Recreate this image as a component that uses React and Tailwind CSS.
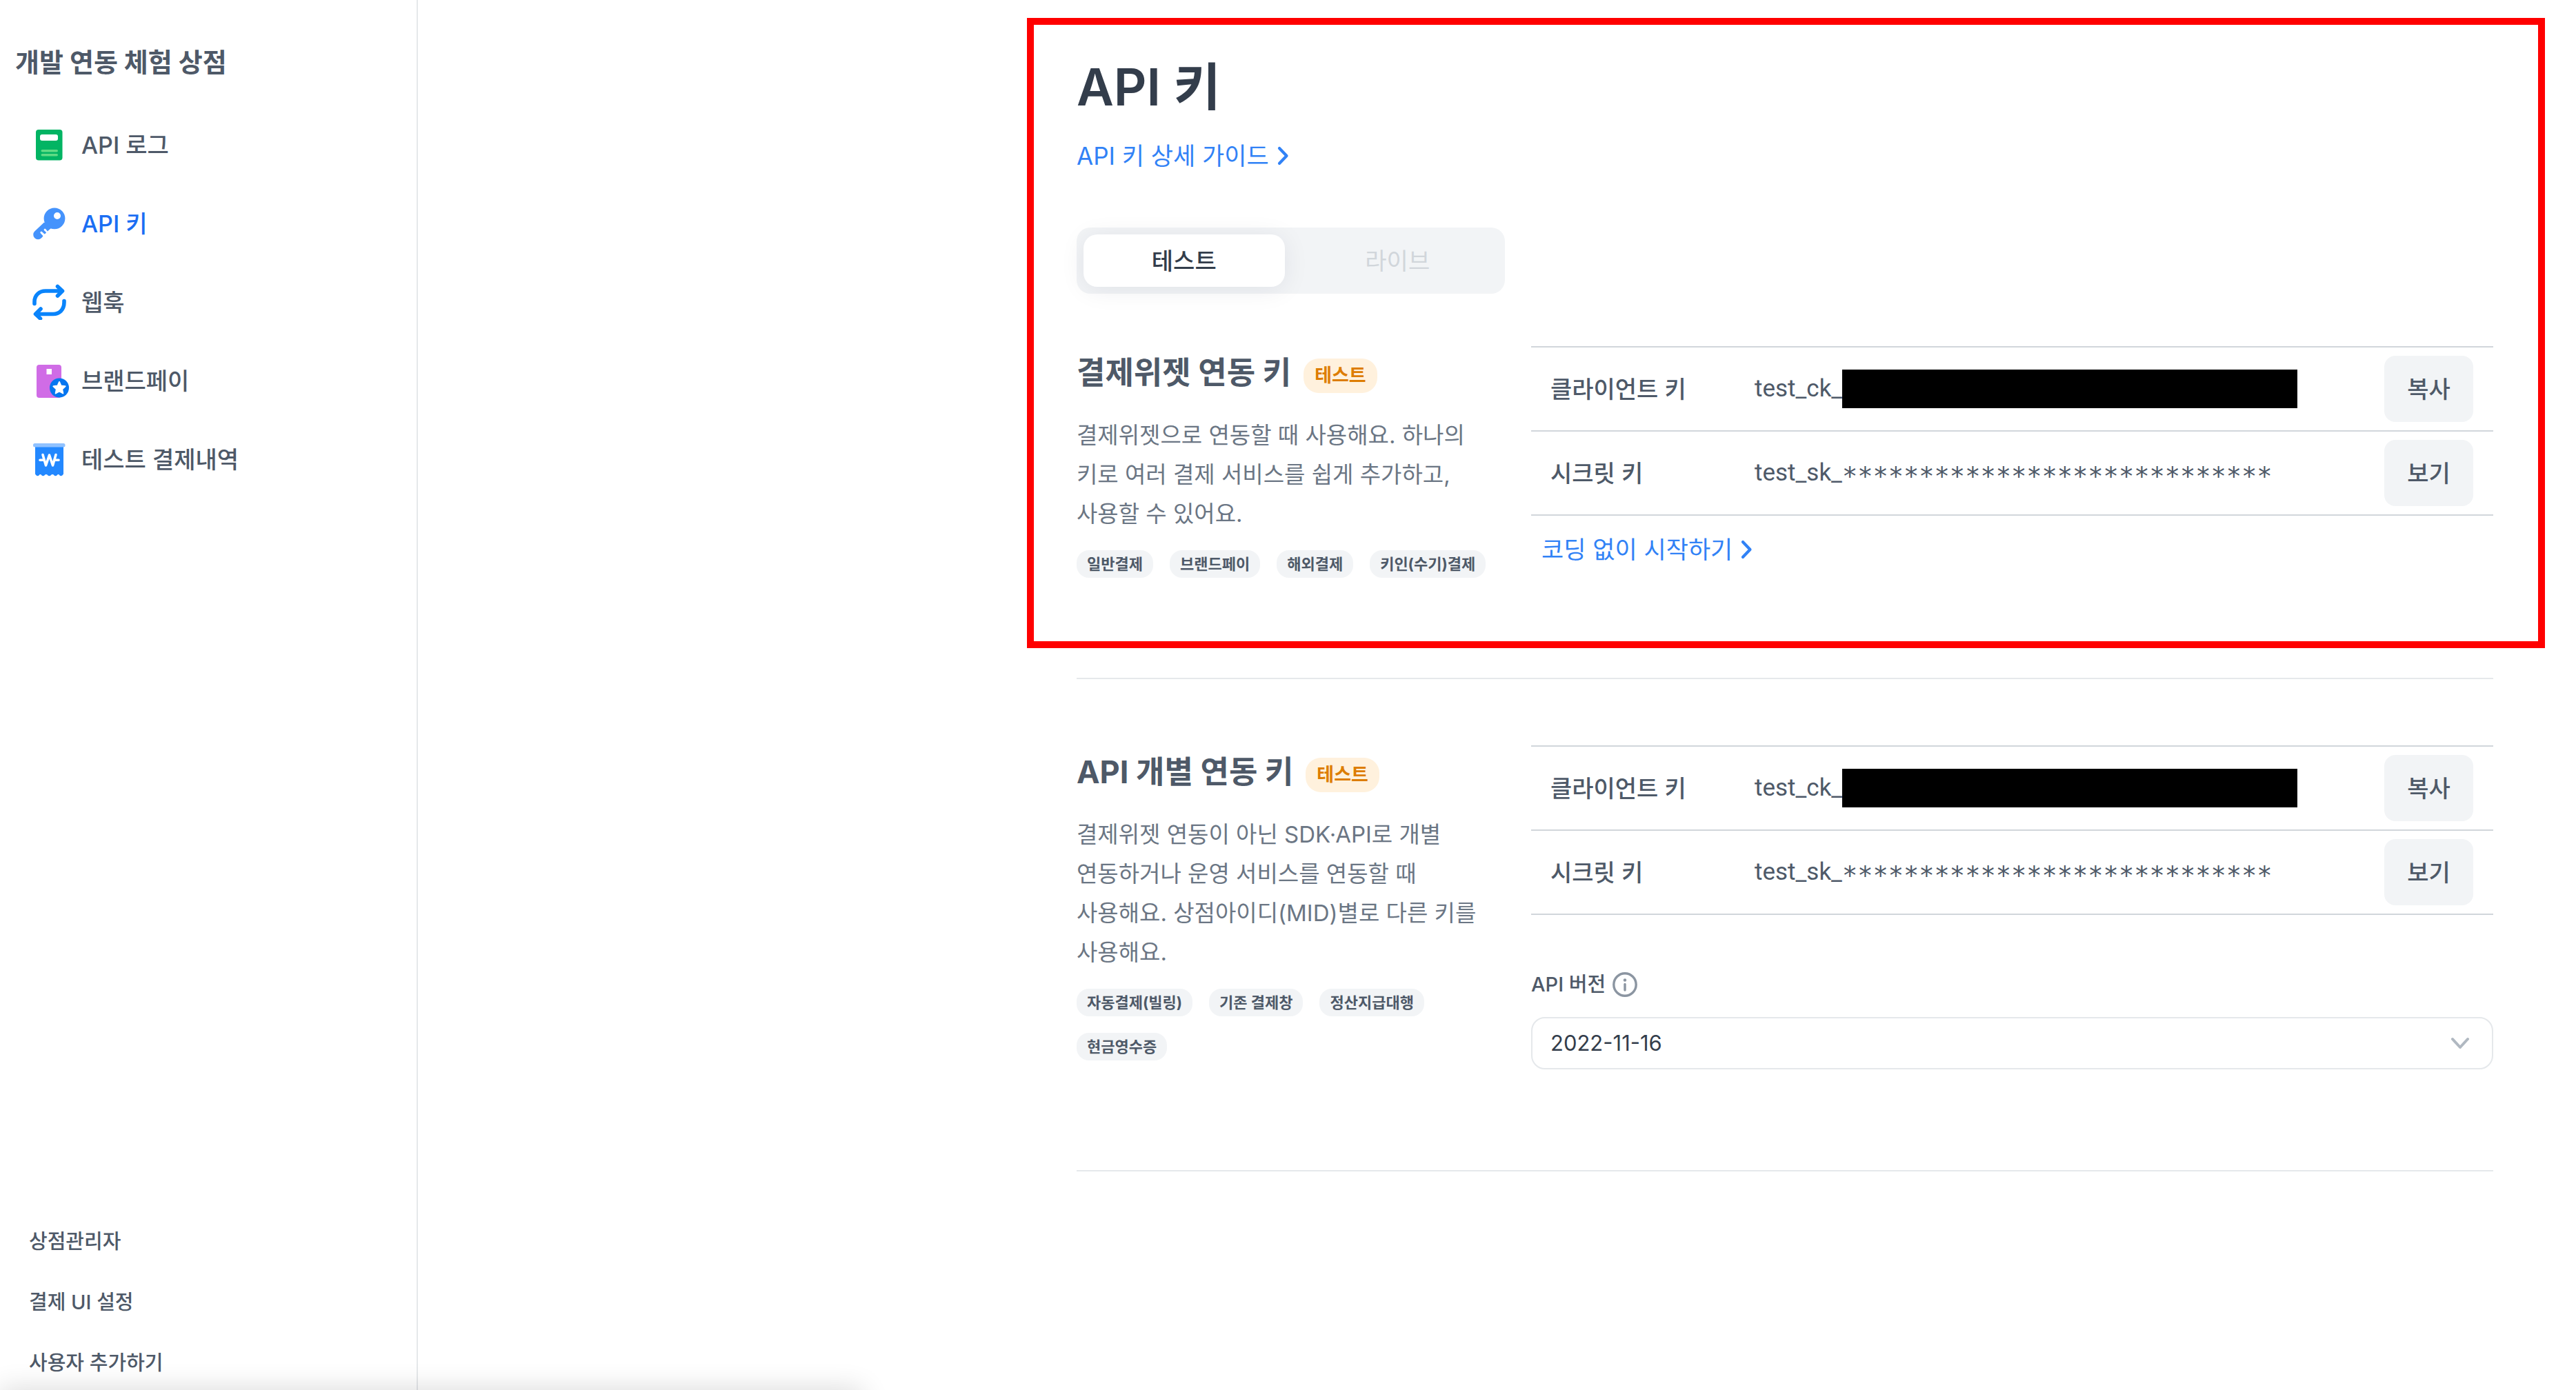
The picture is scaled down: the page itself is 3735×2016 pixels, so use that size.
import { useState } from "react";

function LogIcon() {
  return (
    <svg viewBox="0 0 52 52" className="size-13 shrink-0" aria-hidden="true">
      <rect x="6" y="4" width="38.5" height="44.5" rx="4" fill="#02b463" />
      <rect x="12" y="11" width="26" height="9" rx="3" fill="#fff" />
      <rect x="13.5" y="33" width="24.5" height="3.6" rx="1.8" fill="#5fdb84" />
      <rect x="13.5" y="39" width="24.5" height="3.6" rx="1.8" fill="#5fdb84" />
    </svg>
  );
}

function KeyIcon() {
  return (
    <svg viewBox="0 0 52 52" className="size-13 shrink-0" aria-hidden="true">
      <path
        d="M18 24.5 4.2 37.6a6.8 6.8 0 0 0 9.8 9.6l1.8-1.9c.6-.6.6-1.2 0-1.8l-3-3.2c-1.4-1.6.8-3.4 2.2-2l3 2.8c.5.5 1 .5 1.5 0l1-1c.5-.5.5-1 0-1.5l-2.4-2.4c-1.4-1.6.8-3.4 2.2-2l2.6 3.2L29 32z"
        fill="#4593fc"
      />
      <path
        fillRule="evenodd"
        d="M33 3.4a15.4 15.4 0 1 1 0 30.8 15.4 15.4 0 0 1 0-30.8ZM37 10a5 5 0 1 0 0 10 5 5 0 0 0 0-10Z"
        fill="#4593fc"
      />
    </svg>
  );
}

function WebhookIcon() {
  return (
    <svg
      viewBox="0 0 52 52"
      className="size-13 shrink-0"
      fill="none"
      stroke="#0a84fb"
      strokeWidth="5.6"
      strokeLinecap="round"
      strokeLinejoin="round"
      aria-hidden="true"
    >
      <path d="M4 28.5v-3C4 16 11 10 20 10H43.5M37.5 3.5 44.5 10 37.5 17" />
      <path d="M47 24.5v2C47 37 40 43.5 31 43.5H6.5M13 36 5.5 43.5 12.5 50" />
    </svg>
  );
}

function BrandPayIcon() {
  return (
    <svg viewBox="0 0 52 52" className="size-13 shrink-0" overflow="visible" aria-hidden="true">
      <rect x="7" y="3" width="36" height="48" rx="4" fill="#d06ce6" />
      <rect x="21.5" y="9" width="7.5" height="8" fill="#fff" />
      <circle cx="40" cy="36.5" r="14" fill="#0676f0" />
      <path
        d="m40 28 2.5 5.6 6.1.7-4.5 4.1 1.2 6L40 41.4l-5.3 3 1.2-6-4.5-4.1 6.1-.7z"
        fill="#fff"
        stroke="#fff"
        strokeWidth="2"
        strokeLinejoin="round"
      />
    </svg>
  );
}

function ReceiptIcon() {
  return (
    <svg viewBox="0 0 52 52" className="size-13 shrink-0" aria-hidden="true">
      <path
        d="M5 6h41v41.5c-1 1.5-2.2 2.8-3.6 2.8-2 0-2.3-2.3-3.8-2.3s-2.2 2.3-4.1 2.3-2.4-2.3-4.4-2.3-2.5 2.3-4.6 2.3-2.6-2.3-4.6-2.3-2.5 2.3-4.4 2.3-2.6-2.3-4.1-2.3-1.8 2.3-3.8 2.3C7.2 50.3 6 49 5 47.5z"
        fill="#2388ff"
      />
      <rect x="2" y="3" width="46.5" height="5.4" rx="2.5" fill="#90c2ff" />
      <path
        d="M16 19.5 20.5 35 25.5 20 30.5 35 35 19.5M12 27.2h5.5M34 27.2h5"
        fill="none"
        stroke="#fff"
        strokeWidth="3.6"
        strokeLinecap="round"
        strokeLinejoin="round"
      />
    </svg>
  );
}

function ChevronRight() {
  return (
    <svg viewBox="0 0 18 30" className="h-[30px] w-[18px]" fill="none" stroke="#3182f6" strokeWidth="4.2" strokeLinecap="round" strokeLinejoin="round" aria-hidden="true">
      <path d="M3 4 13.5 15 3 26" />
    </svg>
  );
}

const MENU = [
  { label: "API 로그", Icon: LogIcon },
  { label: "API 키", Icon: KeyIcon, active: true },
  { label: "웹훅", Icon: WebhookIcon },
  { label: "브랜드페이", Icon: BrandPayIcon },
  { label: "테스트 결제내역", Icon: ReceiptIcon },
];

const FOOTER_MENU = ["상점관리자", "결제 UI 설정", "사용자 추가하기"];

function Sidebar() {
  return (
    <aside className="flex h-screen w-[606px] shrink-0 flex-col border-r-2 border-[#e5e8eb] pt-[62px] pb-[19px] text-[#4e5968]">
      <h2 className="pl-[22px] text-[38px] leading-[56px] font-bold">개발 연동 체험 상점</h2>
      <nav className="mt-[35px] flex flex-col pl-[46px]">
        {MENU.map(({ label, Icon, active }) => (
          <a
            key={label}
            href="#"
            aria-current={active ? "page" : undefined}
            className={
              active
                ? "flex h-[114px] items-center gap-5 text-[34px] font-medium text-[#1b6ef3]"
                : "flex h-[114px] items-center gap-5 text-[34px] font-medium"
            }
          >
            <Icon />
            {label}
          </a>
        ))}
      </nav>
      <nav className="mt-auto flex flex-col gap-12 pl-[42px]">
        {FOOTER_MENU.map((label) => (
          <a key={label} href="#" className="text-[29px] leading-[40px] font-medium">
            {label}
          </a>
        ))}
      </nav>
    </aside>
  );
}

function ModeTabs() {
  const [mode, setMode] = useState("테스트");
  return (
    <div role="tablist" className="mt-[76px] flex h-24 w-[621px] gap-[18px] rounded-[20px] bg-[#f2f4f6] p-[10px]">
      {["테스트", "라이브"].map((label) => (
        <button
          key={label}
          type="button"
          role="tab"
          aria-selected={mode === label}
          onClick={() => setMode(label)}
          className={
            mode === label
              ? "flex-1 rounded-[20px] bg-white text-[34px] font-medium text-[#333d4b] shadow-[0_4px_36px_rgba(0,29,58,0.08)]"
              : "flex-1 rounded-[20px] text-[34px] text-[#d1d6db]"
          }
        >
          {label}
        </button>
      ))}
    </div>
  );
}

function KeySummary({ title, description, tags }) {
  return (
    <div className="w-[600px] pt-[7px]">
      <div className="flex items-center gap-[18px]">
        <h2 className="text-[45px] leading-[64px] font-bold text-[#4e5968]">{title}</h2>
        <span className="mt-2 flex h-[50px] items-center rounded-[22px] bg-[#fff1dd] px-4 text-[27px] font-bold text-[#dd7d02]">
          테스트
        </span>
      </div>
      <p className="mt-[30px] text-[33px] leading-[57px] break-keep text-[#6b7684]">{description}</p>
      <ul className="mt-6 flex flex-wrap gap-6">
        {tags.map((tag) => (
          <li key={tag} className="flex h-10 items-center rounded-[18px] bg-[#f2f4f6] px-[15px] text-[22px] font-bold text-[#4e5968]">
            {tag}
          </li>
        ))}
      </ul>
    </div>
  );
}

function RowButton({ children }) {
  return (
    <button type="button" className="h-24 w-[129px] rounded-[16px] bg-[#f2f4f6] text-[34px] font-medium text-[#4e5968]">
      {children}
    </button>
  );
}

function KeyTable() {
  return (
    <table className="w-full border-collapse border-t-2 border-[#d1d6db] text-left text-[34px] text-[#4e5968]">
      <tbody>
        <tr className="h-[122px] border-b-2 border-[#d1d6db]">
          <th scope="row" className="w-[324px] pl-7 font-medium">클라이언트 키</th>
          <td>
            <div className="flex items-center font-['Roboto',sans-serif] text-[35px]">
              test_ck_
              <span className="h-14 w-[660px] bg-black" />
            </div>
          </td>
          <td className="w-[158px] pr-7">
            <RowButton>복사</RowButton>
          </td>
        </tr>
        <tr className="h-[122px] border-b-2 border-[#d1d6db]">
          <th scope="row" className="pl-7 font-medium">시크릿 키</th>
          <td>
            <div className="flex items-center font-['Roboto',sans-serif] text-[35px]">
              test_sk_
              <span className="pt-3 font-['DejaVu_Sans_Mono',monospace] text-[37px] leading-[40px]">****************************</span>
            </div>
          </td>
          <td className="pr-7">
            <RowButton>보기</RowButton>
          </td>
        </tr>
      </tbody>
    </table>
  );
}

function VersionSelect() {
  return (
    <div className="mt-[77px]">
      <div className="flex h-12 items-center gap-[10px]">
        <label htmlFor="api-version" className="text-[29px] font-medium text-[#4e5968]">API 버전</label>
        <svg viewBox="0 0 36 36" className="size-9" fill="none" stroke="#8b95a1" aria-hidden="true">
          <circle cx="18" cy="18" r="16.2" strokeWidth="3.4" />
          <circle cx="18" cy="11.5" r="2.2" fill="#8b95a1" stroke="none" />
          <path d="M18 17.5v8.5" strokeWidth="3.4" strokeLinecap="round" />
        </svg>
      </div>
      <div className="relative mt-[23px]">
        <select
          id="api-version"
          className="h-[76px] w-full appearance-none rounded-[20px] border-2 border-[#e5e8eb] bg-white pl-[26px] text-[31px] text-[#333d4b]"
        >
          <option>2022-11-16</option>
        </select>
        <svg
          viewBox="0 0 28 18"
          className="pointer-events-none absolute top-1/2 right-[34px] h-[18px] w-7 -translate-y-1/2"
          fill="none"
          stroke="#b0b8c1"
          strokeWidth="4"
          strokeLinecap="round"
          strokeLinejoin="round"
          aria-hidden="true"
        >
          <path d="M3 3 14 15 25 3" />
        </svg>
      </div>
    </div>
  );
}

export default function App() {
  return (
    <div className="relative flex min-h-screen overflow-hidden bg-white font-['Inter','Noto_Sans_CJK_KR',sans-serif]">
      <Sidebar />
      <main className="flex-1 pt-[26px] pr-[45px] pl-[883px]">
        <section className="border-[10px] border-[#ff0000] pt-[42px] pr-[65px] pb-[92px] pl-[62px]">
          <h1 className="text-[74px] leading-[96px] font-semibold text-[#333d4b]">API 키</h1>
          <a href="#" className="mt-6 flex items-center gap-3 text-[35px] leading-[56px] text-[#3182f6]">
            API 키 상세 가이드
            <ChevronRight />
          </a>
          <ModeTabs />
          <div className="mt-[76px] grid grid-cols-[659px_1fr]">
            <KeySummary
              title="결제위젯 연동 키"
              description="결제위젯으로 연동할 때 사용해요. 하나의 키로 여러 결제 서비스를 쉽게 추가하고, 사용할 수 있어요."
              tags={["일반결제", "브랜드페이", "해외결제", "키인(수기)결제"]}
            />
            <div>
              <KeyTable />
              <a href="#" className="mt-[21px] ml-[15px] flex items-center gap-3 text-[35px] leading-[56px] text-[#3182f6]">
                코딩 없이 시작하기
                <ChevronRight />
              </a>
            </div>
          </div>
        </section>
        <section className="mt-[43px] mr-[75px] ml-[72px] grid grid-cols-[659px_1fr] border-y-2 border-[#e5e8eb] pt-24 pb-[146px]">
          <KeySummary
            title="API 개별 연동 키"
            description="결제위젯 연동이 아닌 SDK·API로 개별 연동하거나 운영 서비스를 연동할 때 사용해요. 상점아이디(MID)별로 다른 키를 사용해요."
            tags={["자동결제(빌링)", "기존 결제창", "정산지급대행", "현금영수증"]}
          />
          <div>
            <KeyTable />
            <VersionSelect />
          </div>
        </section>
      </main>
      <div className="pointer-events-none absolute top-full left-0 h-10 w-[1250px] shadow-[0_0_40px_rgba(0,0,0,0.16)]" />
    </div>
  );
}
